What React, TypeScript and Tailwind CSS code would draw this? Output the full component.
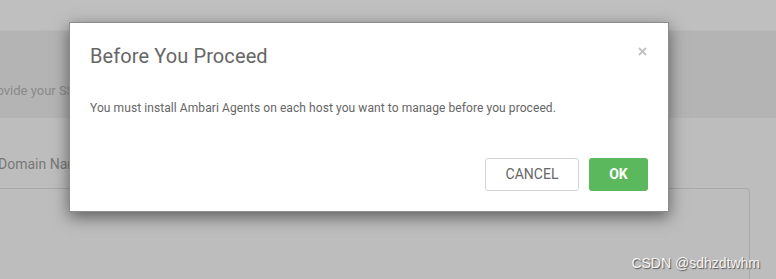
export default function App() {
  return (
    <div
      className="relative w-[776px] h-[279px] overflow-hidden bg-[#bdbdbd]"
      style={{ fontFamily: 'Roboto, "Open Sans", sans-serif' }}
    >
      {/* page behind the modal */}
      <div className="h-[30px] bg-[#bfbfbf]" />
      <div className="h-[88px] bg-[#b4b4b4] border-t border-[#b9b9b9] flex items-center">
        <p className="-ml-[16px] mt-[33px] text-[13px] text-[#8a8a8a] whitespace-nowrap">
          Provide your SSH Private Key to automatically register hosts
        </p>
      </div>
      <div className="pt-[36px]">
        <p className="-ml-[2px] text-[14px] leading-[20px] text-[#777] whitespace-nowrap">
          Domain Name
        </p>
        <div className="-ml-[10px] mt-[14px] w-[760px] h-[200px] rounded-[4px] border border-[#a9a9a9]" />
      </div>

      {/* modal */}
      <div className="absolute left-[69px] top-[22px] w-[600px] h-[190px] bg-white border border-[rgba(0,0,0,0.45)] shadow-[0_5px_15px_rgba(0,0,0,0.5)] flex flex-col">
        <div className="flex items-start justify-between pl-[20px] pr-[21px] pt-[19px]">
          <h4 className="text-[20px] leading-[28px] tracking-[0.1px] text-[#666]">Before You Proceed</h4>
          <svg width="9" height="9" viewBox="0 0 9 9" className="mt-[5px]">
            <path d="M1 1L8 8M8 1L1 8" stroke="#c2c2c2" strokeWidth="1.8" />
          </svg>
        </div>
        <p className="mt-[29px] px-[20px] text-[12px] leading-[18px] tracking-[0.08px] text-[#666]">
          You must install Ambari Agents on each host you want to manage before you proceed.
        </p>
        <div className="mt-auto mb-[20px] mr-[20px] flex justify-end gap-[10px]">
          <button className="w-[94px] h-[33px] rounded-[3px] border border-[#d4d4d4] bg-white text-[14px] text-[#666]">
            CANCEL
          </button>
          <button className="w-[59px] h-[33px] rounded-[3px] bg-[#5cb85c] text-[14px] font-bold text-white">
            OK
          </button>
        </div>
      </div>

      {/* watermark */}
      <span
        className="absolute right-[16px] top-[254px] text-[14px] leading-[18px] text-[#f4f4f4] [text-shadow:1px_1px_1px_#555]"
        style={{ fontFamily: '"Liberation Sans", Arial, sans-serif' }}
      >
        CSDN @sdhzdtwhm
      </span>
    </div>
  );
}
